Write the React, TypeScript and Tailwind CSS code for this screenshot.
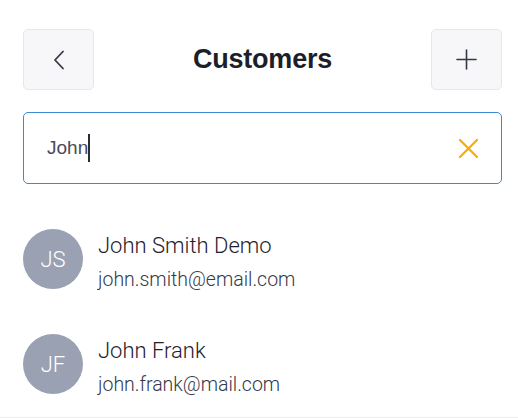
import React from "react";

const customers = [
  { initials: "JS", name: "John Smith Demo", email: "john.smith@email.com" },
  { initials: "JF", name: "John Frank", email: "john.frank@mail.com" },
];

const IconButton = ({ children }: { children: React.ReactNode }) => (
  <button className="w-[71px] h-[61px] rounded-[5px] bg-[#f7f7f9] border border-[#e6e6ee] flex items-center justify-center">
    {children}
  </button>
);

const CustomerRow = ({ initials, name, email }: { initials: string; name: string; email: string }) => (
  <div className="flex h-[60px] items-start gap-[15px] font-['Roboto',sans-serif] font-light">
    <div className="w-[60px] h-[60px] rounded-full bg-[#9aa1b3] flex items-center justify-center text-white text-[22px] shrink-0">
      {initials}
    </div>
    <div className="flex flex-col gap-[13px] pt-[5px]">
      <div className="text-[22px] leading-[24px] text-[#1f222c]">{name}</div>
      <div className="text-[19.5px] leading-[18px] text-[#353948]">{email}</div>
    </div>
  </div>
);

export default function App() {
  return (
    <div className="w-[518px] h-[418px] bg-white font-['Liberation_Sans',Arial,sans-serif] overflow-hidden">
      <div className="h-[418px] border-b border-[#ececec] pl-[23px] pr-[16px] pt-[29px]">
        <div className="flex items-center justify-between">
          <IconButton>
            <svg width="12" height="20" viewBox="0 0 12 20" fill="none">
              <path d="M10 1.5 L2 10 L10 18.5" stroke="#343846" strokeWidth="1.8" strokeLinecap="round" strokeLinejoin="round" />
            </svg>
          </IconButton>
          <h1 className="text-[27px] font-bold text-[#1c1f28] tracking-[-0.2px]">Customers</h1>
          <IconButton>
            <svg width="21" height="21" viewBox="0 0 21 21" fill="none">
              <path d="M10.5 1 V20 M1 10.5 H20" stroke="#343846" strokeWidth="1.6" strokeLinecap="round" />
            </svg>
          </IconButton>
        </div>

        <div className="mt-[22px] h-[72px] rounded-[5px] border border-[#3a8ad6] flex items-center pl-[23px] pr-[22px]">
          <span className="text-[19px] text-[#4a4c58]">John</span>
          <span className="w-[2px] h-[28px] bg-[#2a2d38]" />
          <div className="flex-1" />
          <svg width="21" height="21" viewBox="0 0 21 21" fill="none">
            <path d="M2 2 L19 19 M19 2 L2 19" stroke="#f8ac00" strokeWidth="2.2" strokeLinecap="round" />
          </svg>
        </div>

        <div className="mt-[45px] flex flex-col gap-[45px]">
          {customers.map((c) => (
            <CustomerRow key={c.initials} {...c} />
          ))}
        </div>
      </div>
    </div>
  );
}
